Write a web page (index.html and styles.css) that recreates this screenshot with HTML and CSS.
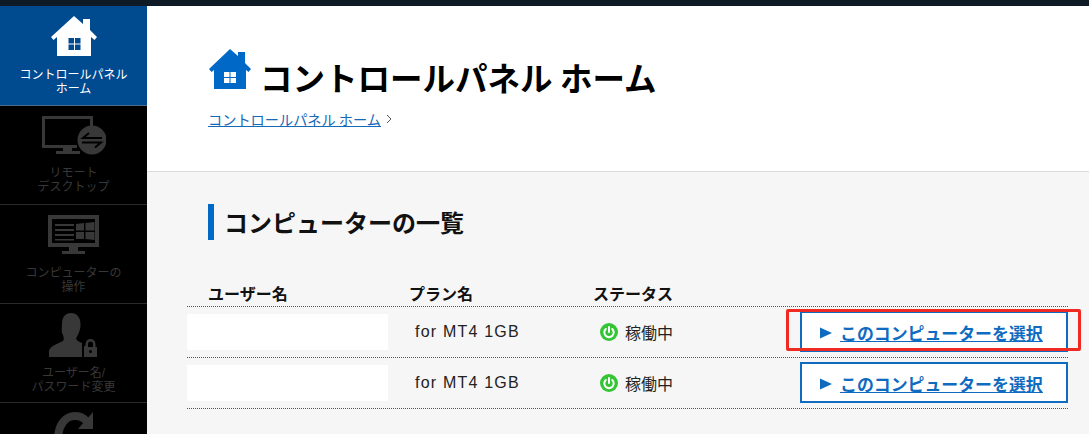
FILE: index.html
```html
<!DOCTYPE html>
<html lang="ja">
<head>
<meta charset="utf-8">
<title>コントロールパネル ホーム</title>
<link rel="stylesheet" href="styles.css">
</head>
<body>
<div class="topbar"></div>
<div class="layout">
  <nav class="sidebar">
    <a class="nav-item active">
      <svg class="nav-icon" width="48" height="45" viewBox="0 0 48 45"><path fill="#fff" d="M24 1 L33 9 V4 H40 V15 L47 22 L44.500 25 L41 22 V41 H7 V22 L3.500 25 L1 22 Z"/><path fill="#004a8f" d="M18.500 23h5.500v5.500h-5.500zM25 23h5.500v5.500H25zM18.500 29.500h5.500V35h-5.500zM25 29.500h5.500V35H25z"/></svg>
      <span class="nav-label">コントロールパネル<br>ホーム</span>
    </a>
    <a class="nav-item">
      <svg class="nav-icon" width="64" height="45" viewBox="0 0 64 45"><path fill="#383838" d="M0 1H51V15H48V4H3V30H35V33H0Z"/><path fill="#383838" d="M21 33h9v3h8v3H14v-3h7z"/><circle cx="50" cy="25" r="14.500" fill="#383838"/><path fill="none" stroke="#000" stroke-width="2" d="M60 23H41L47 18M40 27.500H59L53 32.500"/></svg>
      <span class="nav-label">リモート<br>デスクトップ</span>
    </a>
    <a class="nav-item computer">
      <svg class="nav-icon" width="52" height="45" viewBox="0 0 52 45"><path fill="#383838" fill-rule="evenodd" d="M0 1H51V33H0ZM4 5V29H47V5Z"/><path fill="#383838" d="M21 33h9v4h7v3H14v-3h7z"/><path fill="#383838" d="M7 10h19v2H7zM7 15h19v2H7zM7 20h19v2H7zM7 25h19v1.500H7zM28 10l8-1v7.500h-8zM37.500 9l9-1v8.500h-9zM28 18h8v7h-8zM37.500 18h9v8l-9-1z"/></svg>
      <span class="nav-label">コンピューターの<br>操作</span>
    </a>
    <a class="nav-item user">
      <svg class="nav-icon" width="50" height="45" viewBox="0 0 50 45"><path fill="#383838" d="M22 0C29 0 32 6 31.500 13C31 19 28 23 27 26C28 28 31 29 33 30V44H0V38C1 33 8 31 14 28C15 26 15 25 14 22C12 19 13 15 13 11C13 4 16 0 22 0Z"/><path fill="#383838" fill-rule="evenodd" d="M35 34V33H36.500V31a5 5 0 0 1 10 0v3H48V44H35ZM39 34h5v-3a2.500 2.500 0 0 0-5 0z"/><circle cx="41.500" cy="38.500" r="1.500" fill="#000"/></svg>
      <span class="nav-label">ユーザー名/<br>パスワード変更</span>
    </a>
    <a class="nav-item">
      <svg class="nav-icon" width="40" height="45" viewBox="0 0 40 45"><path fill="none" stroke="#383838" stroke-width="8" d="M4 28C4 12 12 4 21 4C27 4 31 7 33 10"/><path fill="#383838" d="M39 0V17H24Z"/></svg>
    </a>
  </nav>
  <main class="content">
    <header class="page-head">
      <div class="title-row">
        <svg class="title-icon" width="44" height="41" viewBox="0 0 44 41"><path fill="#0069c8" d="M22 0 L30 7 V3 H37 V14 L43 20 L40.500 23 L38 21 V40 H6 V21 L3.500 23 L1 20 Z"/><path fill="#fff" d="M16 23h5.500v5H16zM22.500 23H28v5h-5.500zM16 29h5.500v5H16zM22.500 29H28v5h-5.500z"/></svg>
        <h1 class="page-title">コントロールパネル ホーム</h1>
      </div>
      <div class="breadcrumb"><a class="crumb-link" href="#">コントロールパネル ホーム</a><svg class="crumb-sep" width="6" height="10" viewBox="0 0 6 10"><path fill="none" stroke="#555" stroke-width="1" d="M1 1l4 4-4 4"/></svg></div>
    </header>
    <section class="panel">
      <h2 class="section-title">コンピューターの一覧</h2>
      <div class="list">
        <div class="row head">
          <div class="th name-col">ユーザー名</div>
          <div class="th">プラン名</div>
          <div class="th">ステータス</div>
          <div></div>
        </div>
        <div class="row">
          <div><div class="name-box"></div></div>
          <div class="plan">for MT4 1GB</div>
          <div class="status"><svg width="18" height="18" viewBox="0 0 18 18"><circle cx="9" cy="9" r="9" fill="#34c534"/><path fill="none" stroke="#fff" stroke-width="2" stroke-linecap="round" d="M5.800 6a4.700 4.700 0 1 0 6.400 0M9 4v5"/></svg>稼働中</div>
          <div class="action">
            <a class="select-btn" href="#"><svg class="tri" width="12" height="12" viewBox="0 0 12 12"><path fill="#0e6bbf" d="M0 0.500L12 6L0 11.500Z"/></svg><span class="btn-text">このコンピューターを選択</span></a>
            <div class="highlight"></div>
          </div>
        </div>
        <div class="row">
          <div><div class="name-box"></div></div>
          <div class="plan">for MT4 1GB</div>
          <div class="status"><svg width="18" height="18" viewBox="0 0 18 18"><circle cx="9" cy="9" r="9" fill="#34c534"/><path fill="none" stroke="#fff" stroke-width="2" stroke-linecap="round" d="M5.800 6a4.700 4.700 0 1 0 6.400 0M9 4v5"/></svg>稼働中</div>
          <div class="action">
            <a class="select-btn" href="#"><svg class="tri" width="12" height="12" viewBox="0 0 12 12"><path fill="#0e6bbf" d="M0 0.500L12 6L0 11.500Z"/></svg><span class="btn-text">このコンピューターを選択</span></a>
          </div>
        </div>
      </div>
    </section>
  </main>
</div>
</body>
</html>
```

FILE: styles.css
```css
* { box-sizing: border-box; }
html, body { margin: 0; height: 100%; overflow: hidden; }
body { font-family: "Noto Sans CJK JP", "Noto Sans", sans-serif; color: #111; background: #f6f6f6; }
.topbar { height: 6px; background: #0e1a26; }
.layout { display: flex; height: 428px; }
.sidebar { width: 147px; flex: none; background: #000; overflow: hidden; }
.nav-item { display: flex; flex-direction: column; align-items: center; height: 99px; padding-top: 9px; border-bottom: 1px solid #2b2b2b; color: #383838; }
.nav-item.active { background: #004a8f; color: #fff; height: 100px; padding-top: 9px; border-bottom: 1px solid #4a6b8c; }
.nav-icon { display: block; height: 45px; margin-bottom: 6px; flex: none; }
.active .nav-icon { margin-bottom: 8px; }
.computer .nav-icon { margin-bottom: 7px; }
.user .nav-icon { margin-bottom: 8px; }
.nav-label { font-family: "Liberation Sans", "Noto Sans CJK JP", sans-serif; font-size: 12px; line-height: 14px; text-align: center; }
.content { flex: 1; min-width: 0; display: flex; flex-direction: column; }
.page-head { height: 166px; background: #fff; border-bottom: 1px solid #ddd; padding: 43px 0 0 61px; }
.title-row { display: flex; align-items: flex-start; gap: 8px; height: 48px; }
.title-icon { flex: none; }
.page-title { margin: 0; font-size: 32.500px; line-height: 44px; padding-top: 6px; font-weight: 700; color: #000; white-space: nowrap; }
.breadcrumb { margin-top: 12px; font-size: 14.200px; line-height: 20px; display: flex; align-items: center; gap: 5px; }
.crumb-link { color: #1668b8; }
.crumb-sep { flex: none; }
.panel { flex: 1; padding: 32px 21px 0 40px; }
.section-title { margin: 0 0 0 21px; border-left: 6px solid #0069c8; padding-left: 10px; font-size: 24px; line-height: 36px; height: 36px; font-weight: 700; color: #111; }
.list { margin-top: 40px; width: 881px; }
.row { display: grid; grid-template-columns: 222px 184px 207px 268px; height: 51px; border-bottom: 1px dotted #555; align-items: center; font-size: 16px; }
.row.head { height: 27px; align-items: end; font-size: 16px; font-weight: 700; line-height: 25px; }
.th { color: #111; }
.name-col { padding-left: 21px; }
.name-box { width: 201px; height: 36px; background: #fff; }
.plan { padding-left: 6px; font-family: "Liberation Sans", sans-serif; color: #222; letter-spacing: 1.200px; }
.status { display: flex; align-items: center; gap: 7px; padding-left: 7px; color: #222; }
.action { position: relative; height: 41px; align-self: end; margin-bottom: 5px; }
.select-btn { display: flex; align-items: center; gap: 8px; height: 100%; padding: 2px 0 0 18px; background: #fff; border: 2px solid #0e6bbf; color: #0e6bbf; font-weight: 700; font-size: 16.900px; }
.tri { flex: none; }
.btn-text { text-decoration: underline; }
.highlight { position: absolute; left: -14px; right: -13px; top: -2px; bottom: 1px; border: 3px solid #ee2a22; border-radius: 2px; pointer-events: none; }
```
